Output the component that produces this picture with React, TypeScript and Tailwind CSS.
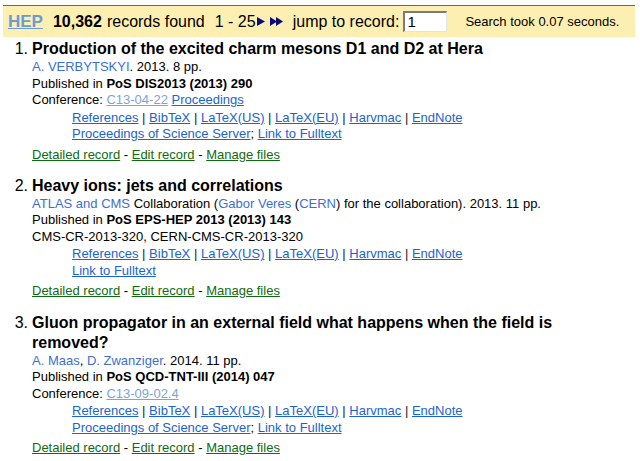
import type { ReactNode } from 'react';

const link = 'text-[#1a63d6] underline';
const person = 'text-[#3b6fd3]';
const visited = 'text-[#7ea3d9] underline';
const green = 'text-[#0f6b0f] underline';

function Sep() {
  return <span className="text-[#222]"> | </span>;
}

function ExportLinks({ extra }: { extra: ReactNode }) {
  return (
    <div className="mt-px pl-10">
      <div>
        <a className={link}>References</a>
        <Sep />
        <a className={link}>BibTeX</a>
        <Sep />
        <a className={link}>LaTeX(US)</a>
        <Sep />
        <a className={link}>LaTeX(EU)</a>
        <Sep />
        <a className={link}>Harvmac</a>
        <Sep />
        <a className={link}>EndNote</a>
      </div>
      <div>{extra}</div>
    </div>
  );
}

function Actions() {
  return (
    <div className="mt-1">
      <a className={green}>Detailed record</a> - <a className={green}>Edit record</a> -{' '}
      <a className={green}>Manage files</a>
    </div>
  );
}

function Record({ n, title, children }: { n: number; title: string; children: ReactNode }) {
  return (
    <div className="flex mb-[12.75px]">
      <div className="w-[28px] shrink-0 text-right text-[16px] leading-5 text-black">{n}.</div>
      <div className="pl-[4px] w-[580px]">
        <div className="text-[16px] font-bold leading-5 text-black">{title}</div>
        <div className="text-[13px] leading-[16.5px] text-black">{children}</div>
      </div>
    </div>
  );
}

export default function App() {
  return (
    <div className="min-h-screen bg-white font-['Liberation_Sans',Arial,sans-serif] text-black">
      <div className="ml-[3px] mr-[5px] pt-[5px]">
        <div className="h-[32px] border-t border-[#2f6fd0] bg-[#fdefb1] flex items-center text-[16px] whitespace-nowrap">
          <a className="ml-[5px] text-[17px] font-bold text-[#6b9bd4] underline">HEP</a>
          <span className="ml-[10px] font-bold">10,362</span>
          <span className="ml-[5px]">records found</span>
          <span className="ml-[10px]">1 - 25</span>
          <svg width="9" height="9" viewBox="0 0 9 9" className="ml-px">
            <polygon points="0,0 8,4.5 0,9" fill="#0a0a7a" />
          </svg>
          <svg width="14" height="9" viewBox="0 0 14 9" className="ml-[4px]">
            <polygon points="0,0 7,4.5 0,9" fill="#0a0a7a" />
            <polygon points="6,0 13,4.5 6,9" fill="#0a0a7a" />
          </svg>
          <span className="ml-[9px]">jump to record:</span>
          <div className="ml-[4px] w-[44px] h-[21px] bg-white border-t-2 border-l-2 border-b border-r border-t-[#7a7a7a] border-l-[#7a7a7a] border-b-[#e4e4e4] border-r-[#e4e4e4] flex items-center pl-[2px] text-[15px]">
            1
          </div>
          <span className="ml-[18px] text-[13px]">Search took 0.07 seconds.</span>
        </div>
      </div>

      <div className="mt-[2px]">
        <Record n={1} title="Production of the excited charm mesons D1 and D2 at Hera">
          <div>
            <a className={person}>A. VERBYTSKYI</a>. 2013. 8 pp.
          </div>
          <div>
            Published in <b>PoS DIS2013 (2013) 290</b>
          </div>
          <div>
            Conference: <a className={visited}>C13-04-22</a> <a className={link}>Proceedings</a>
          </div>
          <ExportLinks
            extra={
              <>
                <a className={link}>Proceedings of Science Server</a>; <a className={link}>Link to Fulltext</a>
              </>
            }
          />
          <Actions />
        </Record>

        <Record n={2} title="Heavy ions: jets and correlations">
          <div>
            <a className={person}>ATLAS and CMS</a> Collaboration (<a className={person}>Gabor Veres</a> (
            <a className={person}>CERN</a>) for the collaboration). 2013. 11 pp.
          </div>
          <div>
            Published in <b>PoS EPS-HEP 2013 (2013) 143</b>
          </div>
          <div>CMS-CR-2013-320, CERN-CMS-CR-2013-320</div>
          <ExportLinks extra={<a className={link}>Link to Fulltext</a>} />
          <Actions />
        </Record>

        <Record n={3} title="Gluon propagator in an external field what happens when the field is removed?">
          <div>
            <a className={person}>A. Maas</a>, <a className={person}>D. Zwanziger</a>. 2014. 11 pp.
          </div>
          <div>
            Published in <b>PoS QCD-TNT-III (2014) 047</b>
          </div>
          <div>
            Conference: <a className={visited}>C13-09-02.4</a>
          </div>
          <ExportLinks
            extra={
              <>
                <a className={link}>Proceedings of Science Server</a>; <a className={link}>Link to Fulltext</a>
              </>
            }
          />
          <Actions />
        </Record>
      </div>
    </div>
  );
}
